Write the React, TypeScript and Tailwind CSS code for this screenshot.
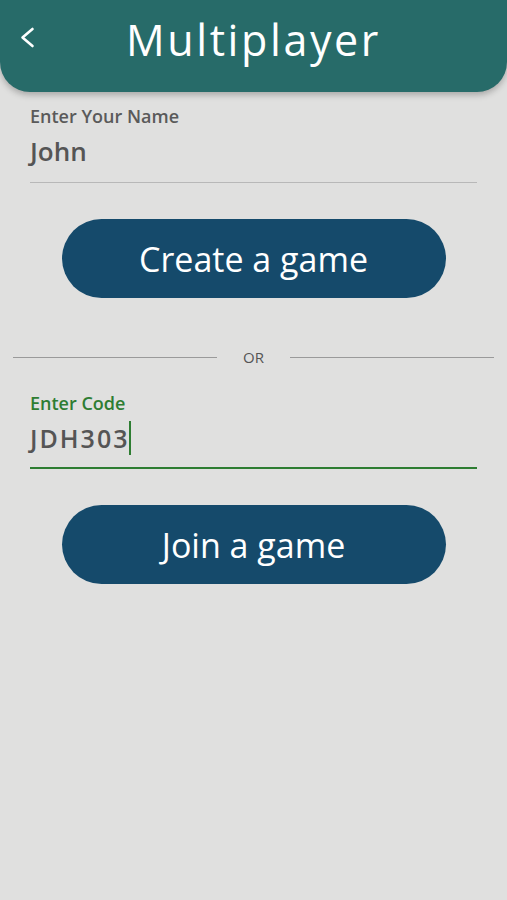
import React from "react";

export default function App() {
  return (
    <div className="min-h-[900px] w-full bg-[#e0e0df] font-['Open_Sans',sans-serif]">
      <div className="relative flex h-[92px] items-center justify-center rounded-b-[30px] bg-[#276b69] shadow-[0_3px_6px_rgba(0,0,0,0.25)]">
        <svg className="absolute left-[19px] top-[27px]" width="16" height="22" viewBox="0 0 16 22" fill="none">
          <path d="M13.5 2 L3.5 10.5 L13.5 19" stroke="white" strokeWidth="2.6" strokeLinecap="round" strokeLinejoin="round" />
        </svg>
        <div className="mt-[-14px] text-[43px] leading-none tracking-[2.6px] text-white">Multiplayer</div>
      </div>

      <div className="px-[30px] pt-[12px]">
        <div className="text-[18px] font-semibold leading-[24px] text-[#5a5a5a]">Enter Your Name</div>
        <div className="mt-[8px] pb-[16px] text-[26px] font-semibold leading-[30px] text-[#555555] border-b border-[#b8b8b8]">John</div>
      </div>

      <div className="mt-[36px] flex justify-center">
        <button className="h-[79px] w-[384px] rounded-full bg-[#154a6b] text-[34px] leading-none text-white">
          Create a game
        </button>
      </div>

      <div className="mt-[51px] flex items-center px-[13px]">
        <div className="h-px flex-1 bg-[#9a9a9a]"></div>
        <div className="w-[73px] text-center text-[15px] leading-[16px] text-[#555]">OR</div>
        <div className="h-px flex-1 bg-[#9a9a9a]"></div>
      </div>

      <div className="mt-[26px] px-[30px]">
        <div className="text-[18px] font-semibold leading-[24px] text-[#2e7d32]">Enter Code</div>
        <div className="mt-[6px] flex items-center pb-[12px] border-b-2 border-[#2e7d32]">
          <span className="text-[25px] font-semibold leading-[30px] tracking-[2px] text-[#555555]">JDH303</span>
          <span className="ml-[-1px] h-[34px] w-[2px] bg-[#2e7d32]"></span>
        </div>
      </div>

      <div className="mt-[36px] flex justify-center">
        <button className="h-[79px] w-[384px] rounded-full bg-[#154a6b] text-[34px] leading-none text-white">
          Join a game
        </button>
      </div>
    </div>
  );
}
